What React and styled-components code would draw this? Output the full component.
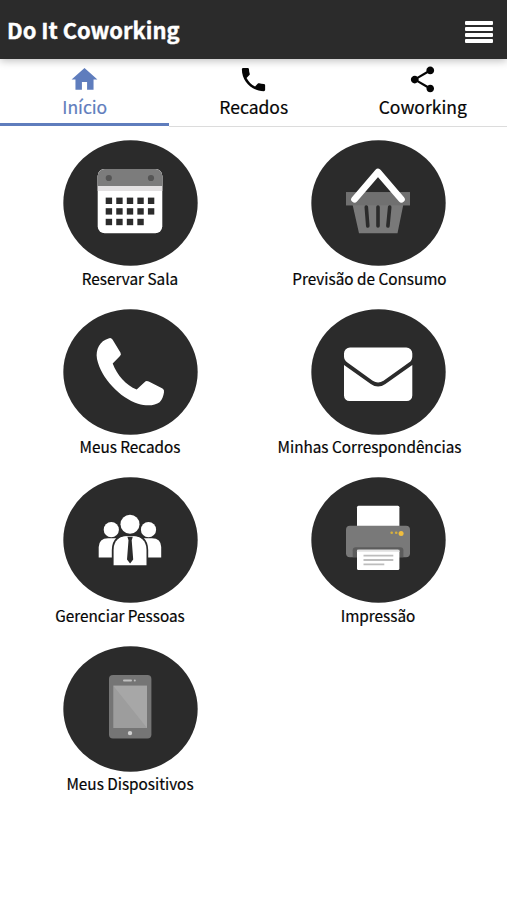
import React from 'react';
import styled, { createGlobalStyle } from 'styled-components';
import { MdHome, MdPhone, MdShare } from 'react-icons/md';

const GlobalStyle = createGlobalStyle`
body {
    margin: 0;
    background: #fff;
    color: #050505;
    font-family: "Noto Sans CJK SC", "Noto Sans", sans-serif;
}
`

const Page = styled.div`
height: 900px;
overflow: hidden;
`

const Header = styled.header`
position: relative;
display: flex;
align-items: center;
justify-content: space-between;
box-sizing: border-box;
height: 59px;
padding: 3px 14px 0 7px;
background: #2b2b2b;
color: #fff;
box-shadow: 0 2px 8px rgba(0, 0, 0, 0.25);
`

const Title = styled.h1`
margin: -3px 0 0;
font-size: 21.9px;
line-height: 30px;
font-weight: 700;
-webkit-text-stroke: 0.4px #fff;
white-space: nowrap;
`

const MenuButton = styled.button`
display: flex;
flex-direction: column;
gap: 2px;
width: 28px;
padding: 0;
margin-top: 2px;
border: none;
background: none;
cursor: pointer;
`

const MenuBar = styled.span`
height: 4px;
border-radius: 1px;
background: #fff;
`

const Tabs = styled.nav`
display: grid;
grid-template-columns: repeat(3, 1fr);
height: 68px;
`

const Tab = styled.a`
display: flex;
flex-direction: column;
align-items: center;
box-sizing: border-box;
padding: 5px 0 0 0.5px;
color: ${props => props.$active ? '#5f7dbd' : '#050505'};
border-bottom: ${props => props.$active ? '3px solid #5f7dbd' : '1px solid #dcdcdc'};
height: ${props => props.$active ? '67px' : '68px'};

svg {
    width: 31px;
    height: 31px;
    flex: none;
}
`

const TabLabel = styled.span`
font-size: 17.5px;
line-height: 24px;
-webkit-text-stroke: 0.2px currentColor;
white-space: nowrap;
`

const Grid = styled.main`
display: grid;
grid-template-columns: 248px 248px;
grid-auto-rows: 168.6px;
padding: 13px 0 0 6px;
`

const Item = styled.div`
display: flex;
flex-direction: column;
align-items: center;
`

const Circle = styled.svg`
display: block;
width: 135px;
height: 126px;
flex: none;
`

const ItemLabel = styled.span`
font-size: 15.3px;
line-height: 24px;
-webkit-text-stroke: 0.2px currentColor;
margin-top: -0.4px;
margin-left: ${props => props.$shift || 0}px;
white-space: nowrap;
`

const Calendar = () => (
    <g>
        <rect x="34.7" y="29" width="64.6" height="64.3" rx="7" fill="#fff" />
        <path d="M34.7 51V36a7 7 0 0 1 7-7h50.6a7 7 0 0 1 7 7v15z" fill="#e3e1e2" />
        <path d="M34.7 46V36a7 7 0 0 1 7-7h50.6a7 7 0 0 1 7 7v10z" fill="#7c7c7c" />
        <circle cx="45.8" cy="38" r="3.1" fill="#555" />
        <circle cx="88" cy="38" r="3.1" fill="#555" />
        {[0, 1, 2].map(row => (
            [0, 1, 2, 3, 4].filter(col => row < 2 || col < 4).map(col => (
                <rect key={`${row}-${col}`} x={42.7 + col * 10.55} y={57.6 + row * 10.6} width="6.4" height="6.4" fill="#2b2b2b" />
            ))
        ))}
    </g>
)

const Basket = () => (
    <g>
        <path d="M35 52.3h64v13h-6.8l-5.7 28H48l-6.3-28H35z" fill="#797979" />
        <path d="M35 52.3h64v13H35z" fill="#707070" />
        <path d="M55.3 67l1.5 19M67 67v19M78.7 67l-1.8 19" stroke="#2b2b2b" strokeWidth="3.6" strokeLinecap="round" />
        <path d="M43.5 59.3L67 32l23.5 27.3" fill="none" stroke="#fff" strokeWidth="6.6" strokeLinecap="round" strokeLinejoin="round" />
    </g>
)

const Handset = () => (
    <path
        d="M45.5 29.5Q48 28.2 49.5 30.6L57.4 43.5Q58.6 45.6 57 47L49.7 54.4C54 66 63 76 73.7 80.6L81.5 73.2Q83.4 71.2 85.8 72.6L99.5 79.6Q101.5 80.8 101 83.2Q100 90 96.6 93.2C92 96.6 84 97.5 75 94.7C57 89 38 69 34 50C32.4 40 37 32 45.5 29.5Z"
        fill="#fff"
    />
)

const Envelope = () => (
    <g fill="#fff">
        <path d="M39 38.6H95.3a6 6 0 0 1 6 6V47.5Q101.3 51.4 98 53.6L72.5 71.8Q67 75.2 61.7 71.8L36.4 53.6Q33 51.2 33 47.5V44.6a6 6 0 0 1 6-6Z" />
        <path d="M33 56L59.8 75Q67 80 74.4 75L101.3 56V86.5a5.5 5.5 0 0 1-5.5 5.5H38.5a5.5 5.5 0 0 1-5.5-5.5Z" />
    </g>
)

const People = () => (
    <g fill="#fff">
        <circle cx="48.3" cy="52.7" r="7.6" />
        <circle cx="85.5" cy="52.7" r="7.6" />
        <path d="M35.7 80.4V70Q36 61.4 45 61.2H89Q98 61.4 98.2 70V80.4Z" />
        <path d="M50 88.6V73C50 62.5 56.5 58.4 63 58.4H71C77.5 58.4 84 62.5 84 73V88.6Z" stroke="#2b2b2b" strokeWidth="2.4" />
        <path d="M50.6 88.3V73C50.6 63 57 59.2 63 59.2H71C77 59.2 83.5 63 83.5 73V88.3Z" />
        <circle cx="67" cy="47.3" r="10.6" fill="#2b2b2b" />
        <circle cx="67" cy="47.3" r="9.5" />
        <path d="M64.4 59.8H69.8L68.7 63.2L70.2 82.5L67.1 86.5L64 82.5L65.5 63.2Z" fill="#2b2b2b" />
    </g>
)

const Printer = () => (
    <g>
        <rect x="46" y="28.7" width="42.4" height="25" rx="1.5" fill="#fff" />
        <rect x="35" y="48.7" width="64" height="31.6" rx="4" fill="#797979" />
        <path d="M41.7 80.3V73.2a3 3 0 0 1 3-3H89.4a3 3 0 0 1 3 3V80.3Z" fill="#5c5c5c" />
        <rect x="46" y="72.7" width="42.4" height="20.2" rx="1.5" fill="#fff" />
        <path d="M46 72.7h42.4v2H46z" fill="#e1e1e1" />
        <path d="M52.5 78.6H82.3M52.5 83H82.3M52.5 87.4H73.3" stroke="#bdbdbd" strokeWidth="1.8" />
        <circle cx="80.7" cy="55.7" r="1.3" fill="#d9b13c" />
        <circle cx="85.2" cy="55.7" r="1.3" fill="#d9b13c" />
        <circle cx="90.1" cy="56.4" r="2.5" fill="#f0bd3e" />
    </g>
)

const Device = () => (
    <g>
        <rect x="46" y="29" width="42.4" height="63.6" rx="4" fill="#757575" />
        <rect x="50.3" y="39.7" width="33.7" height="42.3" fill="#9d9d9d" />
        <path d="M50.3 39.7H84V82Z" fill="#a7a7a7" />
        <path d="M61 34.6h7" stroke="#c0c0c0" strokeWidth="2" strokeLinecap="round" />
        <circle cx="71.8" cy="34.6" r="1" fill="#c0c0c0" />
        <circle cx="67" cy="87.1" r="2.2" fill="#d0d0d0" />
    </g>
)

export default class App extends React.Component {
    state = {
        abaAtiva: "Início",
        abas: [
            { nome: "Início", Icone: MdHome },
            { nome: "Recados", Icone: MdPhone },
            { nome: "Coworking", Icone: MdShare }
        ],
        itens: [
            { nome: "Reservar Sala", Icone: Calendar },
            { nome: "Previsão de Consumo", Icone: Basket, shift: -17 },
            { nome: "Meus Recados", Icone: Handset },
            { nome: "Minhas Correspondências", Icone: Envelope, shift: -17 },
            { nome: "Gerenciar Pessoas", Icone: People, shift: -20 },
            { nome: "Impressão", Icone: Printer },
            { nome: "Meus Dispositivos", Icone: Device }
        ]
    }

    onClickAba = (nome) => {
        this.setState({ abaAtiva: nome })
    }

    render() {
        return (
            <Page>
                <GlobalStyle />
                <Header>
                    <Title>Do It Coworking</Title>
                    <MenuButton aria-label="Menu">
                        <MenuBar />
                        <MenuBar />
                        <MenuBar />
                        <MenuBar />
                    </MenuButton>
                </Header>

                <Tabs>
                    {this.state.abas.map(({ nome, Icone }) => (
                        <Tab key={nome} $active={nome === this.state.abaAtiva} onClick={() => this.onClickAba(nome)}>
                            <Icone />
                            <TabLabel>{nome}</TabLabel>
                        </Tab>
                    ))}
                </Tabs>

                <Grid>
                    {this.state.itens.map(({ nome, Icone, shift }) => (
                        <Item key={nome}>
                            <Circle viewBox="0 0 135 126">
                                <ellipse cx="67.5" cy="63" rx="67.2" ry="62.8" fill="#2b2b2b" />
                                <Icone />
                            </Circle>
                            <ItemLabel $shift={shift}>{nome}</ItemLabel>
                        </Item>
                    ))}
                </Grid>
            </Page>
        )
    }
}
